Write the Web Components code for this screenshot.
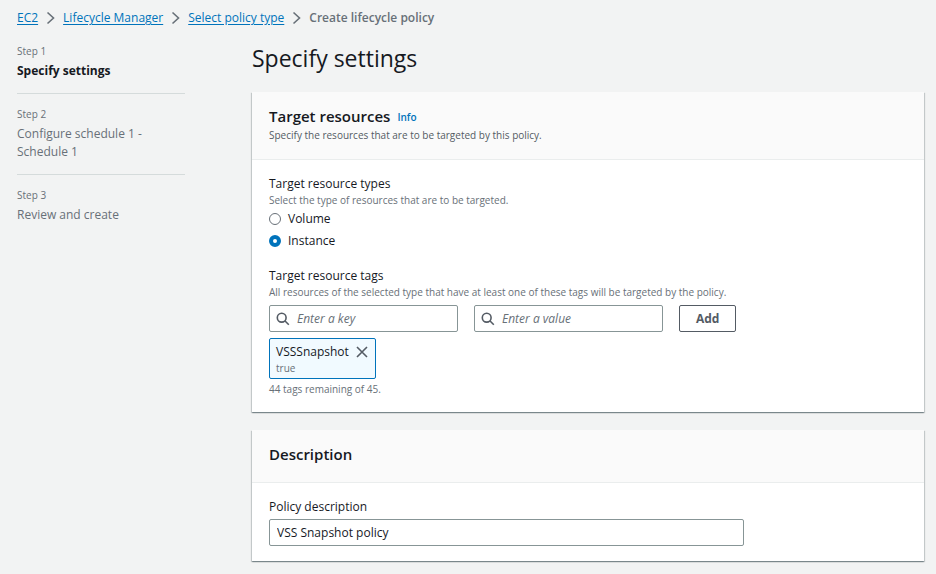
<!DOCTYPE html>
<html lang="en">
<head>
<meta charset="utf-8">
<meta name="viewport" content="width=device-width, initial-scale=1">
<title>Create lifecycle policy</title>
<style>
    body {
        margin: 0;
        background: #f2f3f3;
        color: #16191f;
        font-family: "Open Sans", "Noto Sans", sans-serif;
        font-size: 12px;
        line-height: 18px;
    }
</style>
</head>
<body>
<policy-wizard>
    <bread-crumbs slot="breadcrumbs">
        <crumb-item href="#ec2">EC2</crumb-item>
        <crumb-item href="#lifecycle">Lifecycle Manager</crumb-item>
        <crumb-item href="#type">Select policy type</crumb-item>
        <crumb-item>Create lifecycle policy</crumb-item>
    </bread-crumbs>

    <wizard-step slot="steps" label="Step 1" active>Specify settings</wizard-step>
    <wizard-step slot="steps" label="Step 2">Configure schedule 1 - Schedule 1</wizard-step>
    <wizard-step slot="steps" label="Step 3">Review and create</wizard-step>

    <span slot="title">Specify settings</span>

    <settings-card heading="Target resources" info="Info" description="Specify the resources that are to be targeted by this policy.">
        <resource-types></resource-types>
        <resource-tags></resource-tags>
    </settings-card>

    <settings-card heading="Description">
        <policy-description value="VSS Snapshot policy"></policy-description>
    </settings-card>
</policy-wizard>

<script>
    const fieldStyles = `
        :host {
            display: block;
        }
        * {
            box-sizing: border-box;
        }
        fieldset {
            border: 0;
            margin: 0;
            padding: 0;
            min-width: 0;
        }
        legend {
            padding: 0;
        }
        .hint {
            color: #687078;
            font-size: 10px;
            line-height: 15px;
        }
        .text-input {
            width: 100%;
            height: 27px;
            padding: 0 7px;
            border: 1px solid #879596;
            border-radius: 2px;
            background: #fff;
            color: inherit;
            font: inherit;
        }
        .text-input::placeholder {
            color: #687078;
            font-style: italic;
            opacity: 1;
        }
    `;

    class PolicyWizard extends HTMLElement {
        constructor() {
            super();
            this.attachShadow({ mode: 'open' });
        }

        connectedCallback() {
            this.shadowRoot.innerHTML = `
                <style>
                    :host {
                        display: block;
                        padding: 9px 12px 12px 17px;
                    }
                    .layout {
                        display: grid;
                        grid-template-columns: 1fr 4fr;
                        column-gap: 67px;
                        margin-top: 16px;
                    }
                    main {
                        display: flex;
                        flex-direction: column;
                        gap: 18px;
                    }
                    h1 {
                        margin: 0;
                        font-size: 23px;
                        font-weight: 400;
                        line-height: 31px;
                    }
                </style>
                <slot name="breadcrumbs"></slot>
                <div class="layout">
                    <nav aria-label="Steps"><slot name="steps"></slot></nav>
                    <main>
                        <h1><slot name="title"></slot></h1>
                        <slot></slot>
                    </main>
                </div>
            `;
        }
    }

    class BreadCrumbs extends HTMLElement {
        constructor() {
            super();
            this.attachShadow({ mode: 'open' });
        }

        connectedCallback() {
            this.shadowRoot.innerHTML = `
                <style>
                    :host {
                        display: block;
                    }
                    nav {
                        display: flex;
                        flex-wrap: wrap;
                        gap: 8px;
                    }
                </style>
                <nav aria-label="Breadcrumbs"><slot></slot></nav>
            `;
        }
    }

    class CrumbItem extends HTMLElement {
        constructor() {
            super();
            this.attachShadow({ mode: 'open' });
        }

        connectedCallback() {
            const href = this.getAttribute('href');
            this.shadowRoot.innerHTML = `
                <style>
                    :host {
                        display: flex;
                        align-items: center;
                        gap: 8px;
                    }
                    a {
                        color: #0073bb;
                        text-underline-offset: 2px;
                    }
                    .current {
                        color: #687078;
                        font-weight: 600;
                    }
                    svg {
                        fill: none;
                        stroke: #687078;
                        stroke-width: 1.6;
                    }
                </style>
                ${href
                    ? `<a href="${href}"><slot></slot></a>
                       <svg width="9" height="14" viewBox="0 0 9 14" aria-hidden="true"><path d="M1.500 1.500 7.500 7l-6 5.500"/></svg>`
                    : '<span class="current" aria-current="page"><slot></slot></span>'}
            `;
        }
    }

    class WizardStep extends HTMLElement {
        constructor() {
            super();
            this.attachShadow({ mode: 'open' });
        }

        connectedCallback() {
            this.shadowRoot.innerHTML = `
                <style>
                    :host {
                        display: block;
                        padding: 12px 0 13px;
                        border-bottom: 1px solid #d5dbdb;
                        color: #687078;
                    }
                    :host(:first-of-type) {
                        padding-top: 0;
                    }
                    :host(:last-of-type) {
                        border-bottom: 0;
                    }
                    :host([active]) .name {
                        color: #16191f;
                        font-weight: 700;
                    }
                    .label {
                        margin-bottom: 3px;
                        font-size: 10px;
                        line-height: 16px;
                    }
                    .name {
                        max-width: 140px;
                    }
                </style>
                <div class="label">${this.getAttribute('label')}</div>
                <div class="name"><slot></slot></div>
            `;
        }
    }

    class SettingsCard extends HTMLElement {
        constructor() {
            super();
            this.attachShadow({ mode: 'open' });
        }

        connectedCallback() {
            const info = this.getAttribute('info');
            const description = this.getAttribute('description');
            this.shadowRoot.innerHTML = `
                <style>
                    :host {
                        display: block;
                        background: #fff;
                        box-shadow: 0 1px 1px rgba(0, 28, 36, 0.3), 1px 1px 1px rgba(0, 28, 36, 0.15), -1px 1px 1px rgba(0, 28, 36, 0.15);
                    }
                    header {
                        padding: 13px 17px 17px;
                        border-bottom: 1px solid #eaeded;
                        background: #fafafa;
                    }
                    .title {
                        display: flex;
                        align-items: center;
                        gap: 7px;
                    }
                    h2 {
                        margin: 0;
                        font-size: 15px;
                        font-weight: 600;
                        line-height: 22px;
                    }
                    a {
                        padding-top: 2px;
                        color: #0073bb;
                        font-size: 10px;
                        font-weight: 600;
                        text-decoration: none;
                    }
                    p {
                        margin: 2px 0 0;
                        color: #545b64;
                        font-size: 10px;
                        line-height: 13px;
                    }
                    .content {
                        display: flex;
                        flex-direction: column;
                        gap: 17px;
                        padding: 15px 17px;
                    }
                </style>
                <header>
                    <div class="title">
                        <h2>${this.getAttribute('heading')}</h2>
                        ${info ? `<a href="#info">${info}</a>` : ''}
                    </div>
                    ${description ? `<p>${description}</p>` : ''}
                </header>
                <div class="content"><slot></slot></div>
            `;
        }
    }

    class ResourceTypes extends HTMLElement {
        constructor() {
            super();
            this.attachShadow({ mode: 'open' });
        }

        connectedCallback() {
            this.shadowRoot.innerHTML = `
                <style>
                    ${fieldStyles}
                    .options {
                        display: flex;
                        flex-direction: column;
                        gap: 4px;
                        margin-top: 2px;
                    }
                    .option {
                        display: flex;
                        align-items: center;
                        gap: 7px;
                    }
                    input {
                        appearance: none;
                        width: 12px;
                        height: 12px;
                        margin: 0;
                        border: 1px solid #687078;
                        border-radius: 50%;
                        background: #fff;
                    }
                    input:checked {
                        border: 4px solid #0073bb;
                    }
                </style>
                <fieldset>
                    <legend>Target resource types</legend>
                    <div class="hint">Select the type of resources that are to be targeted.</div>
                    <div class="options">
                        <div class="option">
                            <input type="radio" id="volume" name="type" value="volume">
                            <label for="volume">Volume</label>
                        </div>
                        <div class="option">
                            <input type="radio" id="instance" name="type" value="instance" checked>
                            <label for="instance">Instance</label>
                        </div>
                    </div>
                </fieldset>
            `;
        }
    }

    class SearchInput extends HTMLElement {
        constructor() {
            super();
            this.attachShadow({ mode: 'open' });
        }

        connectedCallback() {
            const placeholder = this.getAttribute('placeholder');
            this.shadowRoot.innerHTML = `
                <style>
                    ${fieldStyles}
                    label {
                        display: grid;
                        align-items: center;
                    }
                    .text-input, svg {
                        grid-area: 1 / 1;
                    }
                    .text-input {
                        padding-left: 27px;
                    }
                    svg {
                        z-index: 1;
                        margin-left: 7px;
                        fill: none;
                        stroke: #545b64;
                        stroke-width: 1.6;
                    }
                </style>
                <label>
                    <svg width="14" height="14" viewBox="0 0 14 14" aria-hidden="true"><circle cx="5.700" cy="5.700" r="4.400"/><path d="m8.800 8.800 4 4"/></svg>
                    <input class="text-input" type="text" placeholder="${placeholder}" aria-label="${placeholder}">
                </label>
            `;
        }
    }

    class TagToken extends HTMLElement {
        constructor() {
            super();
            this.attachShadow({ mode: 'open' });
        }

        connectedCallback() {
            this.shadowRoot.innerHTML = `
                <style>
                    :host {
                        display: inline-grid;
                        grid-template-columns: auto auto;
                        align-items: center;
                        column-gap: 6px;
                        padding: 4px 6px 2px;
                        border: 1px solid #0073bb;
                        border-radius: 2px;
                        background: #f1faff;
                    }
                    .value {
                        color: #687078;
                        font-size: 10px;
                        line-height: 15px;
                    }
                    button {
                        display: flex;
                        padding: 0;
                        border: 0;
                        background: none;
                    }
                    svg {
                        fill: none;
                        stroke: #545b64;
                        stroke-width: 1.6;
                    }
                </style>
                <span>${this.getAttribute('key')}</span>
                <button type="button" aria-label="Remove tag">
                    <svg width="14" height="14" viewBox="0 0 14 14"><path d="m2 2 10 10M12 2 2 12"/></svg>
                </button>
                <span class="value">${this.getAttribute('value')}</span>
            `;
            this.shadowRoot.querySelector('button').addEventListener('click', () => this.remove());
        }
    }

    class ResourceTags extends HTMLElement {
        constructor() {
            super();
            this.attachShadow({ mode: 'open' });
        }

        connectedCallback() {
            this.shadowRoot.innerHTML = `
                <style>
                    ${fieldStyles}
                    .row {
                        display: flex;
                        gap: 16px;
                        margin: 5px 0 6px;
                    }
                    search-input {
                        flex: 0 1 189px;
                    }
                    .add {
                        padding: 0 16px;
                        border: 1px solid #545b64;
                        border-radius: 2px;
                        background: #fff;
                        color: #545b64;
                        font: inherit;
                        font-weight: 700;
                    }
                    .tokens {
                        display: flex;
                        margin-bottom: 3px;
                    }
                </style>
                <fieldset>
                    <legend>Target resource tags</legend>
                    <div class="hint">All resources of the selected type that have at least one of these tags will be targeted by the policy.</div>
                    <div class="row">
                        <search-input placeholder="Enter a key"></search-input>
                        <search-input placeholder="Enter a value"></search-input>
                        <button class="add" type="button">Add</button>
                    </div>
                    <div class="tokens">
                        <tag-token key="VSSSnapshot" value="true"></tag-token>
                    </div>
                    <div class="hint">44 tags remaining of 45.</div>
                </fieldset>
            `;
        }
    }

    class PolicyDescription extends HTMLElement {
        constructor() {
            super();
            this.attachShadow({ mode: 'open' });
        }

        connectedCallback() {
            this.shadowRoot.innerHTML = `
                <style>
                    ${fieldStyles}
                    label {
                        display: block;
                        margin-bottom: 3px;
                    }
                    .text-input {
                        display: block;
                        max-width: 475px;
                    }
                </style>
                <label for="description">Policy description</label>
                <input class="text-input" id="description" type="text" value="${this.getAttribute('value')}">
            `;
        }
    }

    customElements.define('policy-wizard', PolicyWizard);
    customElements.define('bread-crumbs', BreadCrumbs);
    customElements.define('crumb-item', CrumbItem);
    customElements.define('wizard-step', WizardStep);
    customElements.define('settings-card', SettingsCard);
    customElements.define('search-input', SearchInput);
    customElements.define('tag-token', TagToken);
    customElements.define('resource-types', ResourceTypes);
    customElements.define('resource-tags', ResourceTags);
    customElements.define('policy-description', PolicyDescription);
</script>
</body>
</html>
